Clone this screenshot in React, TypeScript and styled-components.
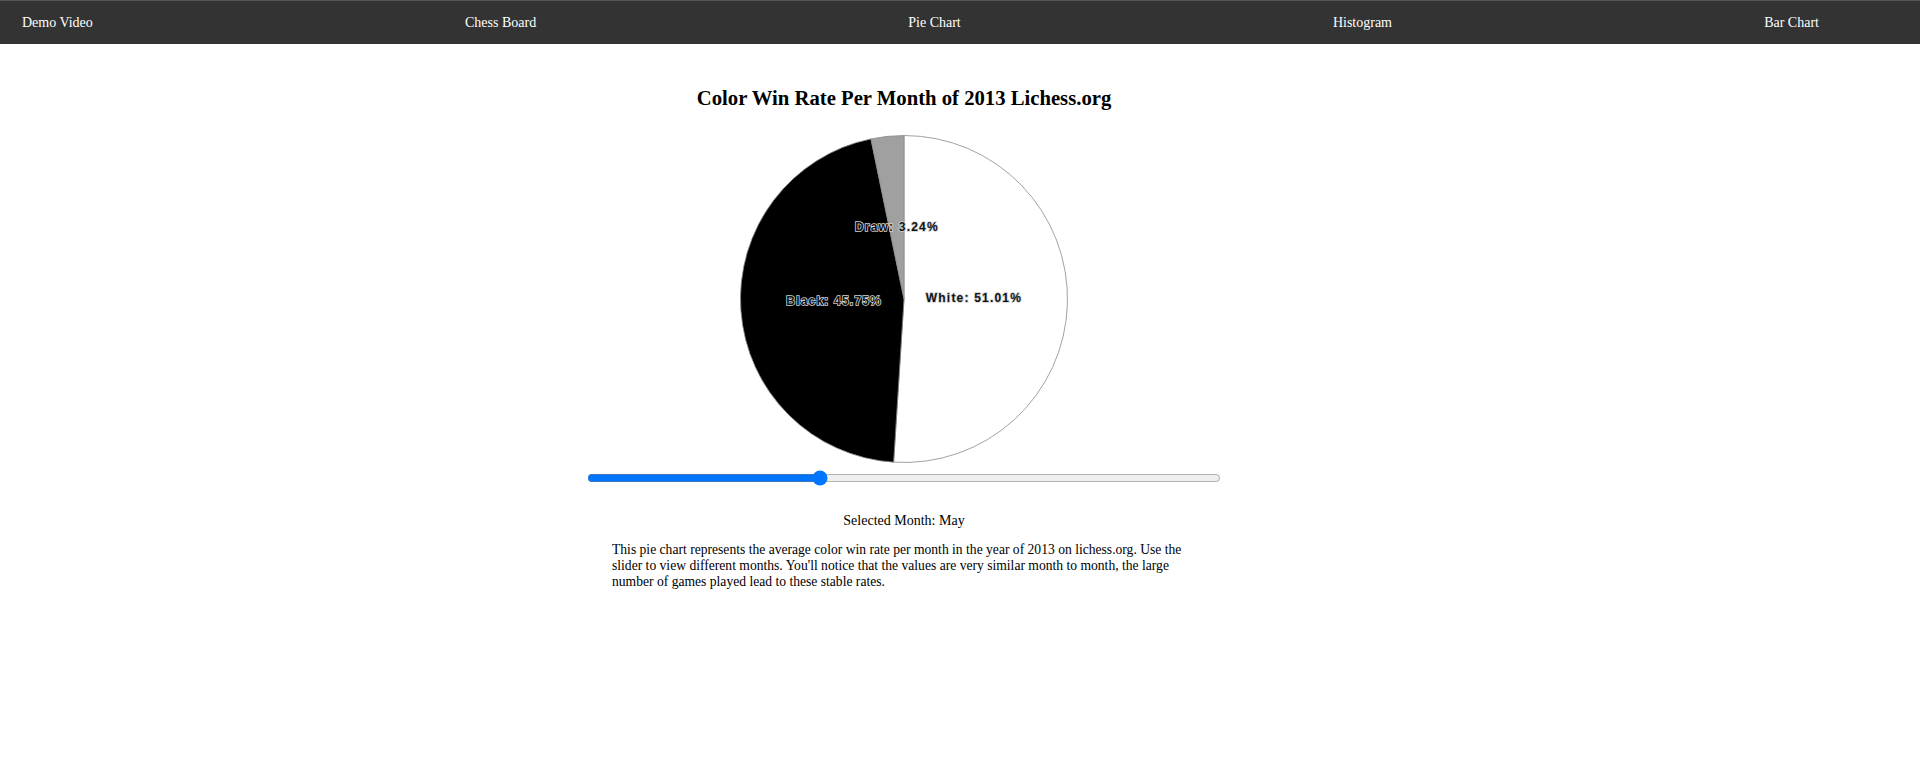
import { useState } from 'react';
import styled, { createGlobalStyle } from 'styled-components';

const GlobalStyle = createGlobalStyle`
  body {
    margin: 0;
    background: #fff;
    color: #000;
    font-family: 'Liberation Serif', 'Times New Roman', serif;
  }
`;

const MONTHS = ['January', 'February', 'March', 'April', 'May', 'June', 'July', 'August', 'September', 'October', 'November', 'December'];

// only May is known from the capture; other months reuse it
const RATES: Record<string, { white: number; black: number; draw: number }> = {
  May: { white: 51.01, black: 45.75, draw: 3.24 },
};

const NAV_ITEMS = ['Demo Video', 'Chess Board', 'Pie Chart', 'Histogram', 'Bar Chart'];

const Nav = styled.nav`
  height: 43px;
  border-top: 1px solid #555;
  background: #333;
  display: flex;
  align-items: center;
  justify-content: space-between;
  padding: 0 101px 0 22px;
`;

const NavLink = styled.a`
  color: #fff;
  font-size: 14px;
  text-decoration: none;
  cursor: pointer;
`;

const Main = styled.main`
  width: 1808px;
  display: flex;
  flex-direction: column;
  align-items: center;
`;

const Title = styled.h2`
  margin: 43px 0 0;
  font-size: 20.7px;
  font-weight: bold;
`;

const Chart = styled.svg`
  display: block;
  margin-top: 24px;
`;

const SliceLabel = styled.text`
  font-family: 'Liberation Sans', Arial, sans-serif;
  font-size: 12px;
  font-weight: bold;
  letter-spacing: 1.2px;
  fill: #111;
  stroke: #d4d4d4;
  stroke-width: 1.6px;
  paint-order: stroke;
`;

const Slider = styled.input`
  width: 634px;
  margin: 6px 2px 0;
`;

const MonthText = styled.div`
  margin-top: 27px;
  font-size: 14px;
`;

const Description = styled.p`
  width: 584px;
  margin: 13px 0 0;
  font-size: 13.6px;
  line-height: 16px;
`;

const R = 163.5;
const LABEL_R = 70;

const point = (a: number, r: number) => [r * Math.sin(a), -r * Math.cos(a)];

const arcPath = (a0: number, a1: number) => {
  const [x0, y0] = point(a0, R);
  const [x1, y1] = point(a1, R);
  const large = a1 - a0 > Math.PI ? 1 : 0;
  return `M0,0L${x0},${y0}A${R},${R} 0 ${large} 1 ${x1},${y1}Z`;
};

const PieChart = ({ month }: { month: string }) => {
  const r = RATES[month] ?? RATES.May;
  const slices = [
    { name: 'White', value: r.white, fill: '#fff' },
    { name: 'Black', value: r.black, fill: '#000' },
    { name: 'Draw', value: r.draw, fill: '#a0a0a0' },
  ];
  const total = slices.reduce((s, d) => s + d.value, 0);

  let start = 0;
  const arcs = slices.map(d => {
    const a0 = start;
    const a1 = start + (d.value / total) * Math.PI * 2;
    start = a1;
    return { ...d, a0, a1 };
  });

  return (
    <Chart width={340} height={330}>
      <g transform="translate(170,165)">
        {arcs.map(d => (
          <path key={d.name} d={arcPath(d.a0, d.a1)} fill={d.fill} stroke="#8a8a8a" strokeWidth={0.8} />
        ))}
        {arcs.map(d => {
          const [x, y] = point((d.a0 + d.a1) / 2, LABEL_R);
          return (
            <SliceLabel key={d.name} x={x} y={y - 3} dy="0.35em" textAnchor="middle">
              {`${d.name}: ${d.value.toFixed(2)}%`}
            </SliceLabel>
          );
        })}
      </g>
    </Chart>
  );
};

const App = () => {
  const [monthIndex, setMonthIndex] = useState(4);
  const month = MONTHS[monthIndex];

  return (
    <>
      <GlobalStyle />
      <Nav>
        {NAV_ITEMS.map(item => <NavLink key={item}>{item}</NavLink>)}
      </Nav>
      <Main>
        <Title>Color Win Rate Per Month of 2013 Lichess.org</Title>
        <PieChart month={month} />
        <Slider
          type="range"
          min={0}
          max={11}
          value={monthIndex}
          onChange={e => setMonthIndex(Number(e.target.value))} />
        <MonthText>Selected Month: {month}</MonthText>
        <Description>
          This pie chart represents the average color win rate per month in the year of 2013 on lichess.org. Use the
          slider to view different months. You'll notice that the values are very similar month to month, the large
          number of games played lead to these stable rates.
        </Description>
      </Main>
    </>
  );
};

export default App;
